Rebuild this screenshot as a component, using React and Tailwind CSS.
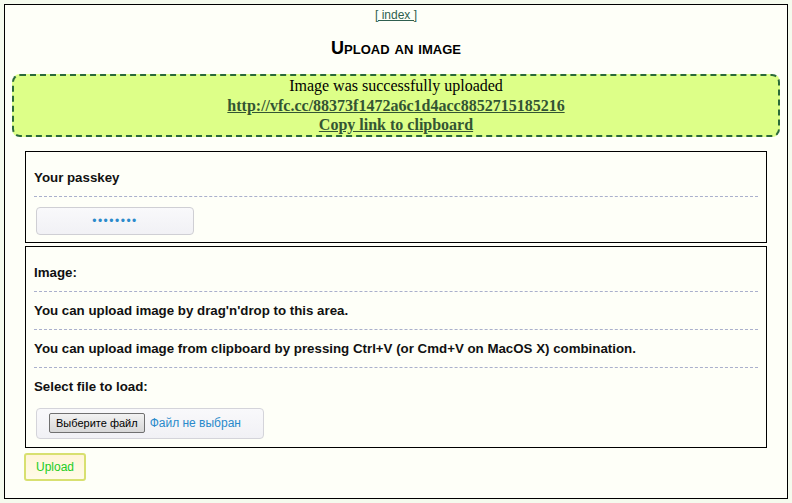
import React from 'react';

const Row = ({ children, first }) => (
  <div
    className={`border-b border-dashed border-[#aab0cc] pb-[10px] text-[13.3px] leading-4 font-bold text-[#111] ${first ? 'pt-[18px]' : 'pt-[11px]'}`}
  >
    {children}
  </div>
);

const App = () => {
  return (
    <div className="min-h-screen w-full bg-[#f5fbee] p-1" style={{ fontFamily: '"Liberation Sans", Arial, sans-serif' }}>
      <div className="flex h-[495px] flex-col border border-black bg-[#fefff8]">
        <div className="pt-[2px] text-center text-[12px] leading-4">
          <a href="#" className="text-[#2f5f4f] underline">[ index ]</a>
        </div>

        <h1 className="mt-[15px] text-center text-[18px] leading-5 font-bold text-black" style={{ fontVariant: 'small-caps' }}>
          Upload an image
        </h1>

        <div
          className="mx-[7px] mt-[16px] rounded-lg border-2 border-dashed border-[#2a6a3a] bg-[#ddff88] text-center text-[16px] leading-[19.5px] text-black"
          style={{ fontFamily: '"Liberation Serif", "Times New Roman", serif' }}
        >
          <div>Image was successfully uploaded</div>
          <div>
            <a href="#" className="font-bold text-[#335533] underline">http://vfc.cc/88373f1472a6c1d4acc8852715185216</a>
          </div>
          <div>
            <a href="#" className="font-bold text-[#335533] underline">Copy link to clipboard</a>
          </div>
        </div>

        <div className="mx-5 mt-[14px] border border-black px-2 pb-[7px]">
          <Row first>Your passkey</Row>
          <div className="pt-[10px]">
            <div className="ml-[2px] flex h-[28px] w-[158px] items-center justify-center rounded-[4px] border border-[#cfcfd4] bg-gradient-to-b from-[#f9f9fb] to-[#f1f1f5]">
              <span className="text-[12px] leading-none tracking-[1.5px] text-[#2a8acb]">••••••••</span>
            </div>
          </div>
        </div>

        <div className="mx-5 mt-[3px] border border-black px-2 pb-2">
          <Row first>Image:</Row>
          <Row>You can upload image by drag'n'drop to this area.</Row>
          <Row>You can upload image from clipboard by pressing Ctrl+V (or Cmd+V on MacOS X) combination.</Row>
          <div className="pt-[11px] text-[13.3px] leading-4 font-bold text-[#111]">Select file to load:</div>
          <div className="mt-[13px] ml-[2px] flex h-[31px] w-[228px] items-center rounded-[4px] border border-[#d4d4da] bg-gradient-to-b from-[#f9f9fb] to-[#f1f1f5] pl-[12px]">
            <button className="h-[20px] rounded-[2px] border border-[#707070] bg-gradient-to-b from-[#f2f2f2] to-[#d8d8d8] px-[6px] text-[11px] leading-none text-black">
              Выберите файл
            </button>
            <span className="ml-[5px] text-[12px] text-[#2a8acb]">Файл не выбран</span>
          </div>
        </div>

        <div className="mt-[5px] ml-[19px]">
          <button className="h-[28px] w-[62px] rounded-[3px] border-2 border-[#d8e070] bg-gradient-to-b from-[#fff4d8] to-[#fffbe8] text-[12px] text-[#22cc22]">
            Upload
          </button>
        </div>
      </div>
    </div>
  );
};

export default App;
